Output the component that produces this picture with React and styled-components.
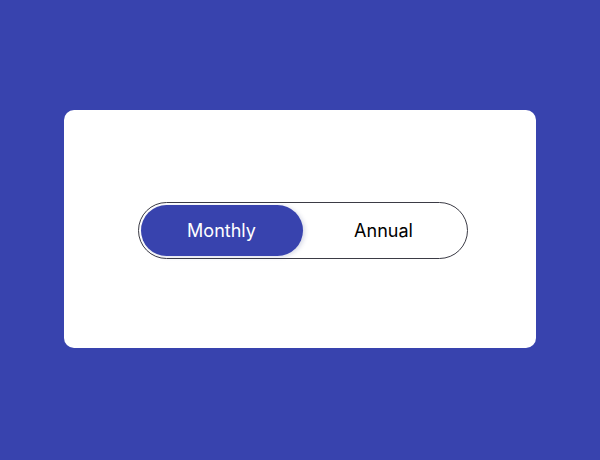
import React, { useState } from 'react';
import styled, { createGlobalStyle } from 'styled-components';

const GlobalStyle = createGlobalStyle`
  html, body {
    margin: 0;
    padding: 0;
    height: 100%;
  }

  body {
    background: #3843ae;
    font-family: Inter, 'Liberation Sans', sans-serif;
  }

  #root {
    height: 100%;
  }
`;

const Page = styled.main`
  height: 100vh;
  box-sizing: border-box;
  padding-bottom: 2px;
  display: flex;
  align-items: center;
  justify-content: center;
`;

const Card = styled.section`
  width: 472px;
  height: 238px;
  background: #ffffff;
  border-radius: 10px;
  display: flex;
  align-items: center;
  justify-content: center;
`;

const Switch = styled.div`
  display: flex;
  padding: 2px;
  margin-left: 5px;
  margin-top: 2px;
  border: 1px solid #3b3b45;
  border-radius: 999px;
`;

const Option = styled.button`
  width: 162px;
  height: 51px;
  border: none;
  border-radius: 999px;
  font-family: Inter, 'Liberation Sans', sans-serif;
  font-size: 18px;
  cursor: pointer;
  background: ${(p) => (p.$active ? '#3843ae' : 'transparent')};
  color: ${(p) => (p.$active ? '#ffffff' : '#000000')};
  box-shadow: ${(p) => (p.$active ? '2px 1px 4px rgba(40, 50, 120, 0.18)' : 'none')};
`;

export default function App() {
  const [plan, setPlan] = useState('monthly');

  return (
    <>
      <GlobalStyle />
      <Page>
        <Card>
          <Switch>
            <Option $active={plan === 'monthly'} onClick={() => setPlan('monthly')}>
              Monthly
            </Option>
            <Option $active={plan === 'annual'} onClick={() => setPlan('annual')}>
              Annual
            </Option>
          </Switch>
        </Card>
      </Page>
    </>
  );
}
